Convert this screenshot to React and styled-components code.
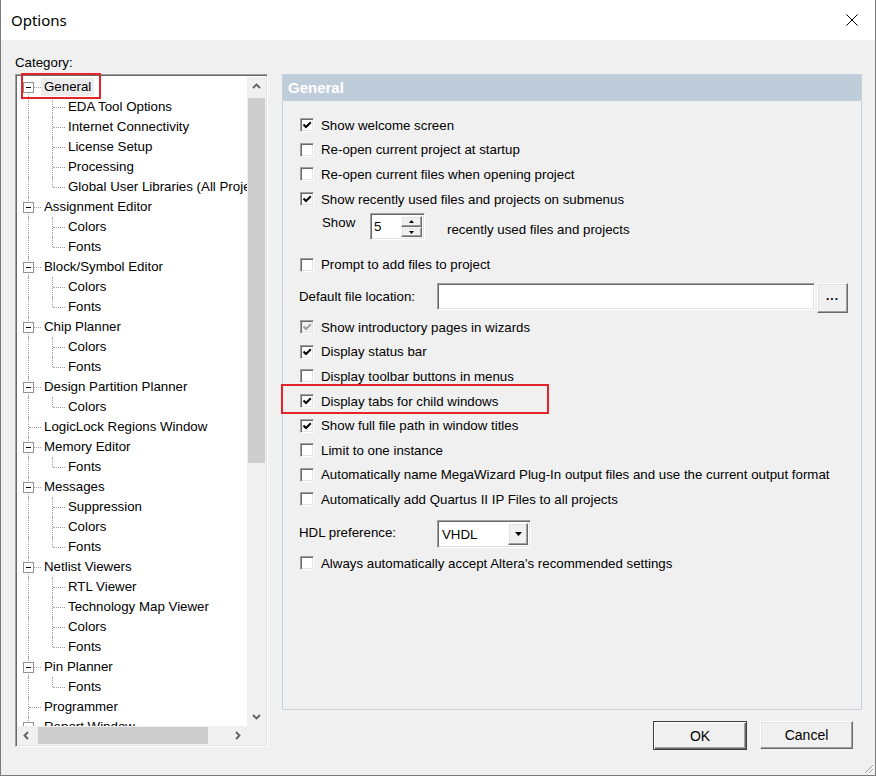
import React from "react";
import styled, { createGlobalStyle, css } from "styled-components";

// ---- data ----
const categories = [
  {
    label: "General",
    selected: true,
    children: [
      "EDA Tool Options",
      "Internet Connectivity",
      "License Setup",
      "Processing",
      "Global User Libraries (All Projects)",
    ],
  },
  { label: "Assignment Editor", children: ["Colors", "Fonts"] },
  { label: "Block/Symbol Editor", children: ["Colors", "Fonts"] },
  { label: "Chip Planner", children: ["Colors", "Fonts"] },
  { label: "Design Partition Planner", children: ["Colors"] },
  { label: "LogicLock Regions Window" },
  { label: "Memory Editor", children: ["Fonts"] },
  { label: "Messages", children: ["Suppression", "Colors", "Fonts"] },
  {
    label: "Netlist Viewers",
    children: ["RTL Viewer", "Technology Map Viewer", "Colors", "Fonts"],
  },
  { label: "Pin Planner", children: ["Fonts"] },
  { label: "Programmer" },
  { label: "Report Window", children: ["Colors", "Fonts"] },
];

// flatten the tree into visible rows
const buildRows = () => {
  const rows = [];
  categories.forEach((cat, i) => {
    const isFirst = i === 0;
    const isLast = i === categories.length - 1;
    const hasKids = !!cat.children;
    rows.push({
      key: cat.label,
      label: cat.label,
      selected: cat.selected,
      gutters: [
        {
          v: isFirst ? "bottom" : isLast ? "top" : "full",
          h: true,
          box: hasKids,
        },
      ],
    });
    (cat.children || []).forEach((child, j) => {
      const lastChild = j === cat.children.length - 1;
      rows.push({
        key: cat.label + "-" + child,
        label: child,
        gutters: [
          { v: isLast ? "" : "full" },
          { v: lastChild ? "top" : "full", h: true },
        ],
      });
    });
  });
  return rows;
};

const generalOptions = [
  { text: "Show welcome screen", checked: true },
  { text: "Re-open current project at startup" },
  { text: "Re-open current files when opening project" },
  { text: "Show recently used files and projects on submenus", checked: true },
];

const displayOptions = [
  { text: "Show introductory pages in wizards", checked: true, disabled: true },
  { text: "Display status bar", checked: true },
  { text: "Display toolbar buttons in menus" },
  { text: "Display tabs for child windows", checked: true },
  { text: "Show full file path in window titles", checked: true },
  { text: "Limit to one instance" },
  {
    text: "Automatically name MegaWizard Plug-In output files and use the current output format",
  },
  { text: "Automatically add Quartus II IP Files to all projects" },
];

const UI_FONT = `"Liberation Sans", Arial, sans-serif`;

const GlobalStyle = createGlobalStyle`
  html, body {
    margin: 0;
    padding: 0;
    background: #ffffff;
  }
  body {
    font-family: ${UI_FONT};
    font-size: 13.3px;
    color: #000;
  }
`;

const sunken = css`
  box-sizing: border-box;
  border-top: 1px solid #a0a0a0;
  border-left: 1px solid #a0a0a0;
  border-right: 1px solid #ffffff;
  border-bottom: 1px solid #ffffff;
  box-shadow: inset 1px 1px 0 #696969, inset -1px -1px 0 #e3e3e3;
`;

const raised = css`
  box-sizing: border-box;
  background: #f0f0f0;
  border-top: 1px solid #ffffff;
  border-left: 1px solid #ffffff;
  border-right: 1px solid #696969;
  border-bottom: 1px solid #696969;
  box-shadow: inset -1px -1px 0 #a0a0a0, inset 1px 1px 0 #e3e3e3;
`;

// ---- window frame ----
const Window = styled.div`
  position: relative;
  box-sizing: border-box;
  width: 876px;
  height: 776px;
  background: #f0f0f0;
  border: 1px solid #7a7a7a;
  border-top: none;
  display: flex;
  flex-direction: column;
  overflow: hidden;
`;

const TitleBar = styled.div`
  height: 40px;
  flex: none;
  background: #ffffff;
  display: flex;
  align-items: center;
  padding-left: 10px;
`;

const Title = styled.div`
  font-family: "Noto Sans", "Open Sans", sans-serif;
  font-size: 15px;
  color: #000;
`;

const CloseButton = styled.div`
  margin-left: auto;
  width: 46px;
  height: 40px;
  display: flex;
  align-items: center;
  justify-content: center;
`;

const Body = styled.div`
  flex: 1;
  display: flex;
  padding: 14px 0 0 14px;
`;

// ---- left column: category tree ----
const LeftCol = styled.div`
  width: 253px;
  display: flex;
  flex-direction: column;
`;

const CategoryLabel = styled.div`
  height: 18px;
  line-height: 18px;
  margin-bottom: 2px;
`;

const TreeBox = styled.div`
  ${sunken};
  height: 673px;
  padding: 2px 1px 1px 1px;
  background: #ffffff;
  display: grid;
  grid-template-columns: 1fr 19px;
  grid-template-rows: 1fr 19px;
`;

const TreeViewport = styled.div`
  overflow: hidden;
  background: #ffffff;
`;

const TreeRow = styled.div`
  height: 20px;
  display: flex;
  align-items: stretch;
  white-space: nowrap;
`;

const Gutter = styled.span`
  position: relative;
  flex: none;
  width: 24px;

  &::before {
    content: "";
    display: ${(p) => (p.$v ? "block" : "none")};
    position: absolute;
    left: 11px;
    top: ${(p) => (p.$v === "bottom" ? "10px" : "0")};
    bottom: ${(p) => (p.$v === "top" ? "10px" : "0")};
    border-left: 1px dotted #a0a0a0;
  }

  &::after {
    content: "";
    display: ${(p) => (p.$h ? "block" : "none")};
    position: absolute;
    left: 12px;
    right: 0;
    top: 10px;
    border-top: 1px dotted #a0a0a0;
  }
`;

const ExpandBox = styled.span`
  position: absolute;
  z-index: 1;
  left: 6px;
  top: 5px;
  width: 11px;
  height: 11px;
  box-sizing: border-box;
  border: 1px solid #919191;
  background: #ffffff;

  &::after {
    content: "";
    position: absolute;
    left: 2px;
    right: 2px;
    top: 4px;
    height: 1px;
    background: #000;
  }
`;

const NodeLabel = styled.span`
  flex: none;
  align-self: center;
  height: 18px;
  line-height: 18px;
  padding: 0 3px;
  background: ${(p) => (p.$selected ? "#ececec" : "transparent")};
`;

const VScroll = styled.div`
  background: #f0f0f0;
  display: flex;
  flex-direction: column;
`;

const HScroll = styled.div`
  background: #f0f0f0;
  display: flex;
`;

const ScrollArrow = styled.div`
  flex: none;
  width: 19px;
  height: 19px;
  display: flex;
  align-items: center;
  justify-content: center;
`;

const VTrack = styled.div`
  flex: 1;
  padding: 2px 1px 0 1px;
`;

const HTrack = styled.div`
  flex: 1;
  padding: 1px 0 1px 2px;
`;

const Thumb = styled.div`
  background: #cdcdcd;
  width: ${(p) => p.$w};
  height: ${(p) => p.$h};
`;

const Corner = styled.div`
  background: #f0f0f0;
`;

// ---- right column: options panel ----
const RightCol = styled.div`
  width: 580px;
  margin-left: 14px;
  padding-top: 20px;
  display: flex;
  flex-direction: column;
`;

const Panel = styled.div`
  box-sizing: border-box;
  height: 636px;
  border: 1px solid #c5d1dc;
  background: #f0f0f0;
  overflow: hidden;
`;

const PanelHeader = styled.div`
  height: 26px;
  line-height: 26px;
  padding-left: 5px;
  background: #bfcddb;
  color: #ffffff;
  font-weight: bold;
  font-size: 15px;
`;

const PanelContent = styled.div`
  padding: 12px 0 0 16px;
  display: flex;
  flex-direction: column;
`;

const CheckRow = styled.label`
  height: 24.6px;
  display: flex;
  align-items: center;
  padding-left: 1px;
  margin-top: ${(p) => p.$gap || 0}px;
  white-space: nowrap;
`;

const Box = styled.span`
  ${sunken};
  flex: none;
  width: 14px;
  height: 14px;
  background: ${(p) => (p.$disabled ? "#f0f0f0" : "#ffffff")};
  display: flex;
  align-items: center;
  justify-content: center;
`;

const CheckText = styled.span`
  margin-left: 7px;
`;

const ShowRow = styled.div`
  height: 27px;
  margin-top: 2px;
  display: flex;
  padding-left: 23px;
  white-space: nowrap;
`;

const ShowLabel = styled.span`
  width: 48px;
  line-height: 18px;
  padding-top: 1px;
`;

const Spinner = styled.div`
  ${sunken};
  width: 55px;
  height: 27px;
  background: #ffffff;
  display: flex;
  padding: 2px;
`;

const SpinValue = styled.span`
  flex: 1;
  line-height: 22px;
  padding-left: 1px;
`;

const SpinButtons = styled.div`
  width: 21px;
  display: flex;
  flex-direction: column;
`;

const SpinButton = styled.div`
  ${raised};
  flex: 1;
  display: flex;
  align-items: center;
  justify-content: center;
`;

const ShowTail = styled.span`
  margin-left: 22px;
  line-height: 18px;
  padding-top: 8px;
`;

const FieldRow = styled.div`
  height: ${(p) => p.$h}px;
  margin-top: ${(p) => p.$gap}px;
  display: flex;
  align-items: flex-start;
  white-space: nowrap;
`;

const FieldLabel = styled.span`
  width: 138px;
  line-height: 18px;
  padding-top: ${(p) => p.$pad}px;
`;

const TextInput = styled.div`
  ${sunken};
  width: 378px;
  height: 27px;
  background: #ffffff;
`;

const BrowseButton = styled.div`
  ${raised};
  width: 31px;
  height: 30px;
  margin-left: 2px;
  text-align: center;
  line-height: 24px;
  font-weight: bold;
  font-size: 12px;
  letter-spacing: 1px;
`;

const ComboBox = styled.div`
  ${sunken};
  width: 94px;
  height: 28px;
  background: #ffffff;
  display: flex;
  padding: 2px;
`;

const ComboValue = styled.span`
  flex: 1;
  line-height: 23px;
  padding-left: 2px;
`;

const DropButton = styled.div`
  ${raised};
  width: 20px;
  display: flex;
  align-items: center;
  justify-content: center;
`;

const ButtonRow = styled.div`
  margin-top: 11px;
  padding-right: 9px;
  display: flex;
  justify-content: flex-end;
  gap: 13px;
`;

const DialogButton = styled.div`
  ${raised};
  width: ${(p) => (p.$default ? 94 : 93)}px;
  height: ${(p) => (p.$default ? 29 : 28)}px;
  display: flex;
  align-items: center;
  justify-content: center;
  font-size: 14px;
  ${(p) =>
    p.$default &&
    css`
      border: 1px solid #3c3c3c;
      box-shadow: inset 1px 1px 0 #ffffff, inset -1px -1px 0 #696969,
        inset -2px -2px 0 #a0a0a0;
    `}
`;

const SizeGrip = styled.div`
  position: absolute;
  right: 1px;
  bottom: 1px;
  width: 12px;
  height: 12px;
`;

const Highlight = styled.div`
  position: absolute;
  left: ${(p) => p.$x}px;
  top: ${(p) => p.$y}px;
  width: ${(p) => p.$w}px;
  height: ${(p) => p.$h}px;
  box-sizing: border-box;
  border: 2px solid #e5232b;
  pointer-events: none;
`;

// ---- small drawings ----
const CloseIcon = () => (
  <svg width="12" height="12" viewBox="0 0 12 12">
    <path d="M0.5 0.5 L11.5 11.5 M11.5 0.5 L0.5 11.5" stroke="#000" strokeWidth="1" />
  </svg>
);

const Chevron = ({ dir }) => {
  const paths = {
    up: "M1 6 L4.5 2.5 L8 6",
    down: "M1 3 L4.5 6.5 L8 3",
    left: "M6 1 L2.5 4.5 L6 8",
    right: "M3 1 L6.5 4.5 L3 8",
  };
  return (
    <svg width="9" height="9" viewBox="0 0 9 9">
      <path d={paths[dir]} fill="none" stroke="#606060" strokeWidth="1.8" />
    </svg>
  );
};

const Tick = ({ color }) => (
  <svg width="10" height="10" viewBox="0 0 10 10">
    <path d="M1.5 4.5 L4 7 L8.8 2.2" fill="none" stroke={color} strokeWidth="2" />
  </svg>
);

const Triangle = ({ up, size = 5 }) => {
  const h = Math.ceil(size / 2);
  return (
    <svg width={size} height={h} viewBox={`0 0 ${size} ${h}`}>
      {up ? (
        <path d={`M0 ${h} L${size / 2} 0 L${size} ${h} Z`} fill="#000" />
      ) : (
        <path d={`M0 0 L${size / 2} ${h} L${size} 0 Z`} fill="#000" />
      )}
    </svg>
  );
};

const Grip = () => (
  <svg width="12" height="12" viewBox="0 0 12 12">
    <path d="M11 3 L3 11 M11 7 L7 11" stroke="#a0a0a0" strokeWidth="1" />
    <path d="M12 4 L4 12 M12 8 L8 12" stroke="#ffffff" strokeWidth="1" />
  </svg>
);

const Checkbox = ({ text, checked, disabled, gap }) => (
  <CheckRow $gap={gap}>
    <Box $disabled={disabled}>
      {checked && <Tick color={disabled ? "#a0a0a0" : "#000"} />}
    </Box>
    <CheckText>{text}</CheckText>
  </CheckRow>
);

const App = () => {
  const rows = buildRows();

  return (
    <>
      <GlobalStyle />
      <Window>
        <TitleBar>
          <Title>Options</Title>
          <CloseButton>
            <CloseIcon />
          </CloseButton>
        </TitleBar>

        <Body>
          <LeftCol>
            <CategoryLabel>Category:</CategoryLabel>
            <TreeBox>
              <TreeViewport>
                {rows.map((row) => (
                  <TreeRow key={row.key}>
                    {row.gutters.map((g, i) => (
                      <Gutter key={i} $v={g.v} $h={g.h}>
                        {g.box && <ExpandBox />}
                      </Gutter>
                    ))}
                    <NodeLabel $selected={row.selected}>{row.label}</NodeLabel>
                  </TreeRow>
                ))}
              </TreeViewport>
              <VScroll>
                <ScrollArrow>
                  <Chevron dir="up" />
                </ScrollArrow>
                <VTrack>
                  <Thumb $w="100%" $h="365px" />
                </VTrack>
                <ScrollArrow>
                  <Chevron dir="down" />
                </ScrollArrow>
              </VScroll>
              <HScroll>
                <ScrollArrow>
                  <Chevron dir="left" />
                </ScrollArrow>
                <HTrack>
                  <Thumb $w="170px" $h="100%" />
                </HTrack>
                <ScrollArrow>
                  <Chevron dir="right" />
                </ScrollArrow>
              </HScroll>
              <Corner />
            </TreeBox>
          </LeftCol>

          <RightCol>
            <Panel>
              <PanelHeader>General</PanelHeader>
              <PanelContent>
                {generalOptions.map((o) => (
                  <Checkbox key={o.text} {...o} />
                ))}

                <ShowRow>
                  <ShowLabel>Show</ShowLabel>
                  <Spinner>
                    <SpinValue>5</SpinValue>
                    <SpinButtons>
                      <SpinButton>
                        <Triangle up size={5} />
                      </SpinButton>
                      <SpinButton>
                        <Triangle size={5} />
                      </SpinButton>
                    </SpinButtons>
                  </Spinner>
                  <ShowTail>recently used files and projects</ShowTail>
                </ShowRow>

                <Checkbox text="Prompt to add files to project" gap={12} />

                <FieldRow $h={30} $gap={6}>
                  <FieldLabel $pad={5}>Default file location:</FieldLabel>
                  <TextInput />
                  <BrowseButton>...</BrowseButton>
                </FieldRow>

                {displayOptions.map((o, i) => (
                  <Checkbox key={o.text} {...o} gap={i === 0 ? 2 : 0} />
                ))}

                <FieldRow $h={28} $gap={8}>
                  <FieldLabel $pad={4}>HDL preference:</FieldLabel>
                  <ComboBox>
                    <ComboValue>VHDL</ComboValue>
                    <DropButton>
                      <Triangle size={7} />
                    </DropButton>
                  </ComboBox>
                </FieldRow>

                <Checkbox
                  text="Always automatically accept Altera's recommended settings"
                  gap={3}
                />
              </PanelContent>
            </Panel>

            <ButtonRow>
              <DialogButton $default>OK</DialogButton>
              <DialogButton>Cancel</DialogButton>
            </ButtonRow>
          </RightCol>
        </Body>

        <SizeGrip>
          <Grip />
        </SizeGrip>

        <Highlight $x={20} $y={73} $w={80} $h={26} />
        <Highlight $x={280} $y={384} $w={268} $h={30} />
      </Window>
    </>
  );
};

export default App;
